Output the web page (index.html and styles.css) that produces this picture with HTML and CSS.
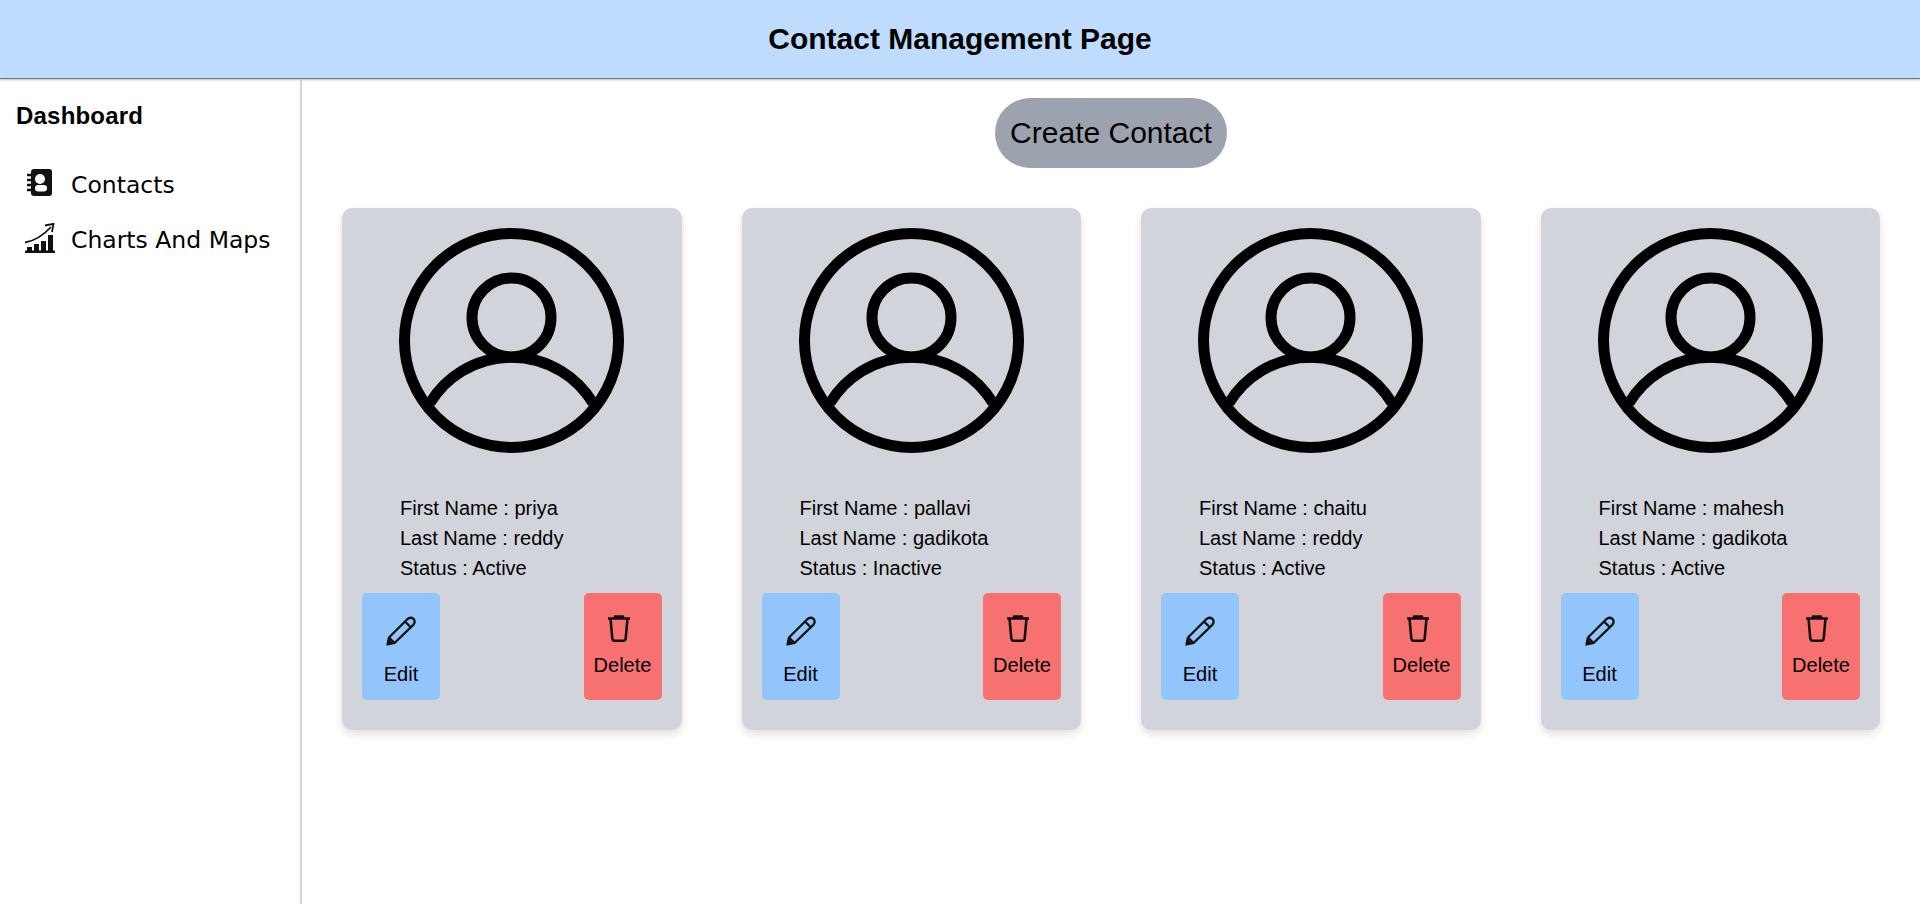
FILE: index.html
```html
<!DOCTYPE html>
<html lang="en">
<head>
    <meta charset="UTF-8">
    <meta name="viewport" content="width=device-width, initial-scale=1.0">
    <title>Contact Management Page</title>
    <link rel="stylesheet" href="styles.css">
</head>
<body>

<svg class="defs" width="0" height="0">
    <symbol id="avatar" viewBox="0 0 225 225">
        <g fill="none" stroke="#000" stroke-width="11">
            <circle cx="112.5" cy="112.5" r="107"/>
            <circle cx="112.5" cy="89.5" r="39.5"/>
            <path d="M31 175A95.4 95.4 0 0 1 194 175"/>
        </g>
    </symbol>
    <symbol id="pencil" viewBox="0 0 30 30">
        <g fill="none" stroke="#111" stroke-width="2.3" stroke-linejoin="round">
            <path d="M1.5 28.5L3 21.5 21.5 3Q24.5 .5 27.5 2.8 29.8 5.8 27.3 8.8L8.5 27Z"/>
            <path d="M19 5.5L25 11.5M3 21.5L8.5 27"/>
        </g>
        <path d="M1.5 28.5L3 23 7 27Z" fill="#111"/>
    </symbol>
    <symbol id="trash" viewBox="0 0 24 27">
        <g fill="none" stroke="#111" stroke-width="2.6" stroke-linejoin="round">
            <path d="M1 3.5H23M8 3.5V1.5H16V3.5"/>
            <path d="M3.5 3.5L5.3 23.5Q5.5 25.8 7.8 25.8H16.2Q18.5 25.8 18.7 23.5L20.5 3.5"/>
        </g>
    </symbol>
</svg>

<header class="top-bar">
    <h1>Contact Management Page</h1>
</header>

<div class="page">
    <aside class="sidebar">
        <h2>Dashboard</h2>
        <a class="nav-link" href="#">
            <span class="nav-icon">
                <svg width="30" height="30" viewBox="0 0 30 30">
                    <rect x="6" y="1" width="21" height="27" rx="3" fill="#111"/>
                    <path d="M2 7H7M2 12H7M2 17H7M2 22H7" stroke="#111" stroke-width="2.4"/>
                    <circle cx="15" cy="11" r="5" fill="#fff"/>
                    <rect x="10" y="17" width="12" height="6.5" rx="3.2" fill="#fff"/>
                </svg>
            </span>
            Contacts
        </a>
        <a class="nav-link" href="#">
            <span class="nav-icon">
                <svg width="30" height="30" viewBox="0 0 30 30">
                    <path d="M0 19.5Q14 17 26 4" fill="none" stroke="#111" stroke-width="1.8"/>
                    <path d="M20 2.5L28.5 .8 27 9" fill="none" stroke="#111" stroke-width="1.8"/>
                    <path d="M2 24H7V28H2ZM9 21H14V28H9ZM16 18H21V28H16ZM23 12H28V28H23Z" fill="#111"/>
                    <rect x="0" y="27.5" width="30" height="2.5" fill="#111"/>
                </svg>
            </span>
            Charts And Maps
        </a>
    </aside>

    <main class="content">
        <button class="create-btn">Create Contact</button>

        <div class="card-grid">
            <div class="card">
                <svg class="avatar"><use href="#avatar"/></svg>
                <div class="details">
                    <div>First Name : priya</div>
                    <div>Last Name : reddy</div>
                    <div>Status : Active</div>
                </div>
                <div class="actions">
                    <button class="edit-btn"><svg class="icon-pencil"><use href="#pencil"/></svg>Edit</button>
                    <button class="delete-btn"><svg class="icon-trash"><use href="#trash"/></svg>Delete</button>
                </div>
            </div>
            <div class="card">
                <svg class="avatar"><use href="#avatar"/></svg>
                <div class="details">
                    <div>First Name : pallavi</div>
                    <div>Last Name : gadikota</div>
                    <div>Status : Inactive</div>
                </div>
                <div class="actions">
                    <button class="edit-btn"><svg class="icon-pencil"><use href="#pencil"/></svg>Edit</button>
                    <button class="delete-btn"><svg class="icon-trash"><use href="#trash"/></svg>Delete</button>
                </div>
            </div>
            <div class="card">
                <svg class="avatar"><use href="#avatar"/></svg>
                <div class="details">
                    <div>First Name : chaitu</div>
                    <div>Last Name : reddy</div>
                    <div>Status : Active</div>
                </div>
                <div class="actions">
                    <button class="edit-btn"><svg class="icon-pencil"><use href="#pencil"/></svg>Edit</button>
                    <button class="delete-btn"><svg class="icon-trash"><use href="#trash"/></svg>Delete</button>
                </div>
            </div>
            <div class="card">
                <svg class="avatar"><use href="#avatar"/></svg>
                <div class="details">
                    <div>First Name : mahesh</div>
                    <div>Last Name : gadikota</div>
                    <div>Status : Active</div>
                </div>
                <div class="actions">
                    <button class="edit-btn"><svg class="icon-pencil"><use href="#pencil"/></svg>Edit</button>
                    <button class="delete-btn"><svg class="icon-trash"><use href="#trash"/></svg>Delete</button>
                </div>
            </div>
        </div>
    </main>
</div>

</body>
</html>
```

FILE: styles.css
```css
* {
    box-sizing: border-box;
}

body {
    margin: 0;
    height: 100vh;
    overflow: hidden;
    display: flex;
    flex-direction: column;
    background-color: #fff;
    color: #000;
    font-family: "Liberation Sans", Arial, sans-serif;
}

.defs {
    display: block;
    height: 0;
}

.top-bar {
    height: 79px;
    flex-shrink: 0;
    display: flex;
    align-items: center;
    justify-content: center;
    background-color: #bfdbfe;
    border-bottom: 1px solid #6b7280;
    box-shadow: 0 1px 2px rgba(0, 0, 0, 0.25);
}

.top-bar h1 {
    margin: 0;
    font-size: 30px;
    font-weight: bold;
}

.page {
    flex: 1;
    display: flex;
}

.sidebar {
    width: 302px;
    flex-shrink: 0;
    padding: 23px 0 0 16px;
    border-right: 2px solid #d1d5db;
}

.sidebar h2 {
    margin: 0 0 27px;
    font-size: 24px;
    line-height: 28px;
    font-weight: bold;
    letter-spacing: 0.2px;
}

.nav-link {
    height: 55px;
    display: flex;
    align-items: center;
    color: #000;
    text-decoration: none;
    font-family: "Comic Sans MS", "DejaVu Sans", cursive;
    font-size: 23.5px;
}

.nav-icon {
    width: 55px;
    padding-left: 9px;
    display: flex;
    align-items: center;
}

.nav-icon svg {
    margin-bottom: 4px;
}

.content {
    flex: 1;
    display: flex;
    flex-direction: column;
    align-items: center;
    padding: 19px 40px 0;
}

.create-btn {
    height: 70px;
    padding: 0 15px;
    border: none;
    border-radius: 35px;
    background-color: #9ca3af;
    color: #000;
    font-family: inherit;
    font-size: 30px;
}

.card-grid {
    width: 100%;
    margin-top: 40px;
    display: grid;
    grid-template-columns: repeat(4, 1fr);
    gap: 60px;
}

.card {
    padding: 20px 20px 30px;
    border-radius: 10px;
    background-color: #d1d5db;
    box-shadow: 0 4px 8px rgba(0, 0, 0, 0.12);
}

.avatar {
    display: block;
    width: 225px;
    height: 225px;
    margin: 0 auto;
}

.details {
    margin-top: 40px;
    padding-left: 38px;
    font-size: 20px;
    line-height: 30px;
}

.actions {
    margin-top: 10px;
    display: flex;
    justify-content: space-between;
}

.edit-btn,
.delete-btn {
    width: 78px;
    height: 107px;
    padding: 0;
    border: none;
    border-radius: 5px;
    display: flex;
    flex-direction: column;
    align-items: center;
    justify-content: flex-start;
    color: #000;
    font-family: inherit;
    font-size: 20px;
    line-height: 22px;
}

.edit-btn {
    padding-top: 23px;
    background-color: #93c5fd;
}

.delete-btn {
    padding-top: 22px;
    background-color: #f87171;
}

.icon-pencil {
    width: 30px;
    height: 30px;
    margin-bottom: 17px;
}

.icon-trash {
    width: 24px;
    height: 27px;
    margin: 0 8px 12px 0;
}
```
